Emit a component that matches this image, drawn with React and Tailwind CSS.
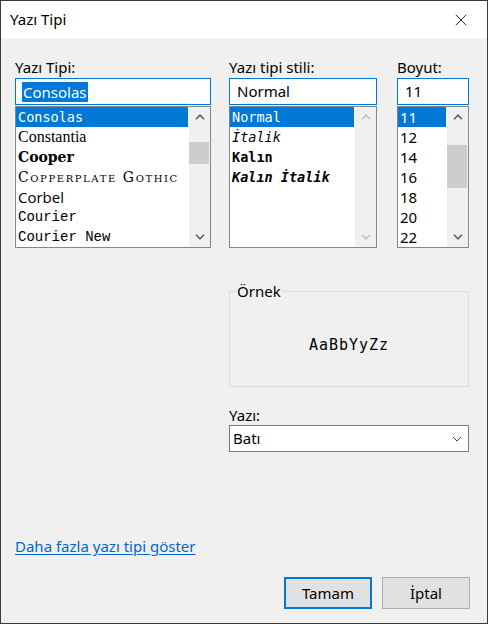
import { X } from 'lucide-react'

const ui = { fontFamily: '"Noto Sans", "Open Sans", sans-serif' }

function Chevron({ dir = 'up', disabled = false }) {
  const color = disabled ? '#c1c1c1' : '#606060'
  return (
    <svg width="10" height="6" viewBox="0 0 10 6">
      <path
        d={dir === 'up' ? 'M1 5.2 L5 1.2 L9 5.2' : 'M1 0.8 L5 4.8 L9 0.8'}
        fill="none"
        stroke={color}
        strokeWidth="1.6"
      />
    </svg>
  )
}

function ScrollBar({ thumbTop, thumbHeight, disabled }) {
  return (
    <div className="w-[21px] bg-[#f0f0f0] flex flex-col">
      <div className="h-[20px] flex items-center justify-center">
        <Chevron dir="up" disabled={disabled} />
      </div>
      <div className="flex-1 flex flex-col">
        {!disabled && (
          <div
            className="bg-[#cdcdcd] w-[20px]"
            style={{ marginTop: thumbTop, height: thumbHeight }}
          />
        )}
      </div>
      <div className="h-[20px] flex items-center justify-center">
        <Chevron dir="down" disabled={disabled} />
      </div>
    </div>
  )
}

function Field({ label, value, width, selectedInput, children, scroll }) {
  return (
    <div className="flex flex-col" style={{ width }}>
      <div className="h-[20px] leading-[20px] text-[15px] text-black" style={ui}>
        {label}
      </div>
      <div className="mt-[1px] h-[27px] border border-[#0078d7] bg-white flex items-center text-[15px]" style={ui}>
        {selectedInput ? (
          <span className="ml-[6px] bg-[#0078d7] text-white leading-[20px] px-[1px]">{value}</span>
        ) : (
          <span className="ml-[7px] text-black">{value}</span>
        )}
      </div>
      <div className="mt-[1px] h-[142px] border border-[#828790] bg-white flex">
        <div className="flex-1 flex flex-col pr-[1px]">{children}</div>
        <ScrollBar {...scroll} />
      </div>
    </div>
  )
}

function Row({ selected, className = '', style, children }) {
  return (
    <div
      className={`h-[20px] flex items-center pl-[2px] whitespace-nowrap overflow-hidden ${selected ? 'bg-[#0078d7] text-white' : 'text-black'} ${className}`}
      style={style}
    >
      {children}
    </div>
  )
}

const mono = { fontFamily: '"DejaVu Sans Mono", "Liberation Mono", monospace' }
const serif = { fontFamily: '"DejaVu Serif", "Liberation Serif", serif' }

export default function App() {
  return (
    <div className="w-[488px] h-[624px] border border-[#3a3a3a] flex flex-col bg-[#f0f0f0]" style={ui}>
      {/* Title bar */}
      <div className="h-[37px] bg-white flex items-center justify-between pl-[9px] pr-[16px]">
        <span className="text-[15px] text-black">Yazı Tipi</span>
        <X size={20} strokeWidth={1} className="text-black" />
      </div>

      {/* Body */}
      <div className="flex-1 flex flex-col pl-[14px] pr-[18px] pt-[19px]">
        <div className="flex">
          <Field
            label="Yazı Tipi:"
            value="Consolas"
            width={196}
            selectedInput
            scroll={{ thumbTop: 15, thumbHeight: 22 }}
          >
            <Row selected className="text-[13.5px]" style={mono}>Consolas</Row>
            <Row className="text-[16px]" style={{ fontFamily: '"Liberation Serif", serif' }}>Constantia</Row>
            <Row className="text-[14px] font-black" style={serif}>Cooper</Row>
            <Row className="text-[14px] tracking-[1.6px]" style={{ ...serif, fontVariant: 'small-caps' }}>Copperplate Gothic</Row>
            <Row className="text-[15px]" style={{ fontFamily: '"Open Sans", sans-serif' }}>Corbel</Row>
            <Row className="text-[14px]" style={{ fontFamily: '"Liberation Mono", monospace' }}>Courier</Row>
            <Row className="text-[14px]" style={{ fontFamily: '"Liberation Mono", monospace' }}>Courier New</Row>
          </Field>
          <div className="w-[18px]" />
          <Field
            label="Yazı tipi stili:"
            value="Normal"
            width={148}
            scroll={{ disabled: true }}
          >
            <Row selected className="text-[13.5px]" style={mono}>Normal</Row>
            <Row className="text-[13.5px] italic" style={mono}>İtalik</Row>
            <Row className="text-[13.5px] font-bold" style={mono}>Kalın</Row>
            <Row className="text-[13.5px] font-bold italic" style={mono}>Kalın İtalik</Row>
          </Field>
          <div className="w-[20px]" />
          <Field
            label="Boyut:"
            value="11"
            width={72}
            scroll={{ thumbTop: 18, thumbHeight: 43 }}
          >
            {['11', '12', '14', '16', '18', '20', '22'].map((s, i) => (
              <Row key={s} selected={i === 0} className="text-[15px]">{s}</Row>
            ))}
          </Field>
        </div>

        {/* Sample + script */}
        <div className="ml-[214px] w-[240px] flex flex-col">
          <fieldset className="mt-[33px] border border-[#dcdcdc] h-[106px] px-0 pb-0">
            <legend className="ml-[6px] px-[1px] leading-[20px] text-[15px] text-black">Örnek</legend>
            <div className="h-[84px] flex items-center justify-center pt-[4px]">
              <span className="text-[15px] tracking-[1px] text-black" style={mono}>AaBbYyZz</span>
            </div>
          </fieldset>

          <div className="mt-[18px] h-[20px] leading-[20px] text-[15px] text-black">Yazı:</div>
          <div className="h-[27px] border border-[#7a7a7a] bg-white flex items-center justify-between pl-[3px] pr-[6px]">
            <span className="text-[15px] text-black">Batı</span>
            <svg width="10" height="6" viewBox="0 0 10 6">
              <path d="M1 1 L5 5 L9 1" fill="none" stroke="#444" strokeWidth="1" />
            </svg>
          </div>
        </div>

        <div className="mt-[84px] h-[20px] leading-[20px]">
          <a href="#" className="text-[15px] text-[#0066cc] underline underline-offset-[2px]">
            Daha fazla yazı tipi göster
          </a>
        </div>

        <div className="mt-[21px] flex justify-end gap-[10px] mr-[-1px]">
          <button className="w-[88px] h-[32px] border-2 border-[#0078d7] bg-[#e1e1e1] text-[15px] text-black">
            Tamam
          </button>
          <button className="w-[88px] h-[32px] border border-[#adadad] bg-[#e1e1e1] text-[15px] text-black">
            İptal
          </button>
        </div>
      </div>
    </div>
  )
}
